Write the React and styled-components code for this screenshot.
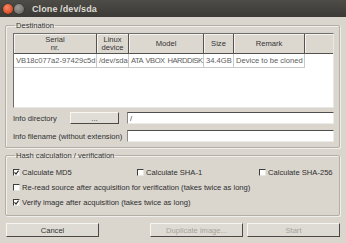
import React from 'react';
import styled, { createGlobalStyle } from 'styled-components';

const GlobalStyle = createGlobalStyle`
  html, body {
    margin: 0;
    padding: 0;
    background: #dad6ce;
  }
  body {
    font-family: "Liberation Sans", Arial, sans-serif;
    color: #333;
  }
`;

const columns = '83px 32px 75px 30px 71px 1fr';

const rows = [
  { serial: 'VB18c077a2-97429c5d', device: '/dev/sda', model: 'ATA VBOX HARDDISK', size: '34.4GB', remark: 'Device to be cloned' },
];

function CheckMark({ checked }) {
  return (
    <Box>
      {checked && (
        <svg width="5" height="5" viewBox="0 0 5 5">
          <path d="M0.5 2.4 L2 4 L4.6 0.6" fill="none" stroke="#2e2e2e" strokeWidth="1.2" />
        </svg>
      )}
    </Box>
  );
}

function Check({ checked, children }) {
  return (
    <CheckLabel>
      <CheckMark checked={checked} />
      <span>{children}</span>
    </CheckLabel>
  );
}

function App() {
  return (
    <Window>
      <GlobalStyle />
      <TitleBar>
        <WinButton $color="radial-gradient(circle at 40% 35%, #f58a66, #e0532b 60%, #b83c1a)" />
        <WinButton $color="radial-gradient(circle at 40% 35%, #9c9b96, #74736e 65%, #5c5b57)" />
        <Title>Clone /dev/sda</Title>
      </TitleBar>
      <Body>
        <Group>
          <Legend>Destination</Legend>
          <TableFrame>
            <HeaderRow>
              <HeaderCell>Serial<br />nr.</HeaderCell>
              <HeaderCell>Linux<br />device</HeaderCell>
              <HeaderCell>Model</HeaderCell>
              <HeaderCell>Size</HeaderCell>
              <HeaderCell>Remark</HeaderCell>
              <HeaderCell $last />
            </HeaderRow>
            {rows.map((r) => (
              <DataRow key={r.serial}>
                <Cell>{r.serial}</Cell>
                <Cell>{r.device}</Cell>
                <Cell $tight>{r.model}</Cell>
                <Cell>{r.size}</Cell>
                <Cell>{r.remark}</Cell>
              </DataRow>
            ))}
          </TableFrame>
          <Fields>
            <FieldLabel>Info directory</FieldLabel>
            <SmallButton>...</SmallButton>
            <Input defaultValue="/" />
            <FieldLabel $wide>Info filename (without extension)</FieldLabel>
            <Input defaultValue="" />
          </Fields>
        </Group>
        <Group $spaced>
          <Legend>Hash calculation / verification</Legend>
          <CheckGrid>
            <Check checked>Calculate MD5</Check>
            <Check>Calculate SHA-1</Check>
            <Check>Calculate SHA-256</Check>
            <Check>Re-read source after acquisition for verification (takes twice as long)</Check>
            <Check checked>Verify image after acquisition (takes twice as long)</Check>
          </CheckGrid>
        </Group>
        <ButtonBar>
          <PushButton>Cancel</PushButton>
          <ButtonGroup>
            <PushButton $disabled>Duplicate image...</PushButton>
            <PushButton $disabled>Start</PushButton>
          </ButtonGroup>
        </ButtonBar>
      </Body>
    </Window>
  );
}

const Window = styled.div`
  width: 346px;
  height: 243px;
  display: flex;
  flex-direction: column;
  background: #dad6ce;
  overflow: hidden;
`

const TitleBar = styled.div`
  height: 17px;
  flex: none;
  display: flex;
  align-items: center;
  gap: 1px;
  padding-left: 3px;
  background: linear-gradient(#4d4c47, #3b3a36);
`

const WinButton = styled.div`
  width: 10px;
  height: 10px;
  border-radius: 50%;
  background: ${(p) => p.$color};
  box-shadow: 0 0 0 0.5px #2a2926;
`

const Title = styled.div`
  margin-left: 7px;
  font-size: 9px;
  font-weight: bold;
  color: #dfdbd2;
  letter-spacing: 0.1px;
`

const Body = styled.div`
  flex: 1;
  display: flex;
  flex-direction: column;
  padding: 4px 6px 8px 5px;
`

const Group = styled.fieldset`
  margin: ${(p) => (p.$spaced ? '3px' : '0')} 0 0 0;
  padding: 3px 5px 5px 7px;
  border: 1px solid #b3afa7;
  border-radius: 2px;
  box-shadow: inset 1px 1px 0 #f1efeb, 1px 1px 0 #f1efeb;
  min-width: 0;
`

const Legend = styled.legend`
  font-size: 7.6px;
  line-height: 9px;
  padding: 0 1px;
  margin-left: 2px;
  color: #333;
`

const TableFrame = styled.div`
  height: 73px;
  background: #fff;
  border: 1px solid;
  border-color: #6f6d69 #e9e7e3 #e9e7e3 #6f6d69;
`

const HeaderRow = styled.div`
  display: grid;
  grid-template-columns: ${columns};
  height: 20px;
`

const HeaderCell = styled.div`
  display: flex;
  align-items: center;
  justify-content: center;
  text-align: center;
  background: #dcd8d0;
  font-size: 7.6px;
  line-height: 8px;
  color: #333;
  border-right: ${(p) => (p.$last ? 'none' : '1px solid #55534f')};
  border-bottom: 1px solid #55534f;
  box-shadow: inset 1px 1px 0 #f4f3f0;
`

const DataRow = styled.div`
  display: grid;
  grid-template-columns: ${columns};
  height: 14px;
`

const Cell = styled.div`
  display: flex;
  align-items: center;
  padding: 0 1px 0 2px;
  font-size: 7.6px;
  letter-spacing: ${(p) => (p.$tight ? '-0.5px' : '0')};
  word-spacing: ${(p) => (p.$tight ? '1.2px' : '0')};
  color: #5c5c5c;
  white-space: nowrap;
  overflow: hidden;
  border-right: 1px solid #c9c9c9;
  border-bottom: 1px solid #c9c9c9;
`

const Fields = styled.div`
  display: grid;
  grid-template-columns: 57px 57px 1fr;
  row-gap: 6px;
  margin-top: 4px;
  align-items: center;
`

const FieldLabel = styled.div`
  grid-column: ${(p) => (p.$wide ? '1 / 3' : 'auto')};
  font-size: 7.6px;
  color: #2e2e2e;
  white-space: nowrap;
`

const SmallButton = styled.button`
  width: 49px;
  height: 12px;
  padding: 0;
  font-family: inherit;
  font-size: 7.6px;
  color: #3c3c3c;
  background: #e0ddd7;
  border: 1px solid;
  border-color: #f7f6f3 #4b4a47 #4b4a47 #f7f6f3;
`

const Input = styled.input`
  height: 12px;
  box-sizing: border-box;
  padding: 0 2px;
  font-family: inherit;
  font-size: 7.6px;
  color: #333;
  background: #fff;
  border: 1px solid;
  border-color: #4f4e4b #ecebe8 #ecebe8 #8b8985;
  outline: none;
`

const CheckGrid = styled.div`
  display: grid;
  grid-template-columns: 124px 122px 1fr;
  grid-auto-rows: 15px;
  align-items: center;
  padding-top: 2px;
  & > :nth-child(n + 4) {
    grid-column: 1 / 4;
  }
`

const CheckLabel = styled.label`
  display: flex;
  align-items: center;
  gap: 2px;
  font-size: 7.6px;
  color: #2e2e2e;
  white-space: nowrap;
`

const Box = styled.span`
  width: 7px;
  height: 7px;
  box-sizing: border-box;
  display: flex;
  align-items: center;
  justify-content: center;
  background: #fff;
  border: 1px solid;
  border-color: #3f3e3b #e8e6e2 #e8e6e2 #3f3e3b;
`

const ButtonBar = styled.div`
  display: flex;
  justify-content: space-between;
  margin-top: 7px;
  padding-left: 1px;
`

const ButtonGroup = styled.div`
  display: flex;
  gap: 4px;
`

const PushButton = styled.button`
  width: 93px;
  height: 14px;
  padding: 0;
  font-family: inherit;
  font-size: 7.6px;
  color: ${(p) => (p.$disabled ? '#a7a39c' : '#333')};
  background: #dedbd4;
  border: 1px solid;
  border-color: #f6f5f2 #4a4946 #4a4946 #f6f5f2;
`

export default App;
